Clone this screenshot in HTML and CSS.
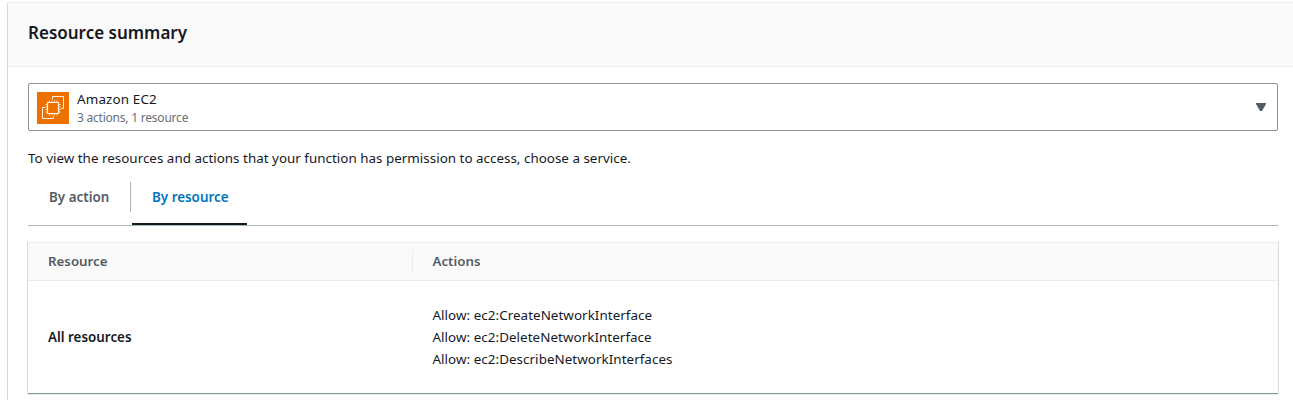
FILE: index.html
```html
<!DOCTYPE html>
<html lang="en">
<head>
<meta charset="utf-8">
<title>Resource summary</title>
<link rel="stylesheet" href="styles.css">
</head>
<body>
<section class="card">
  <header class="card-header"><h2 class="card-title"><span>Resource summary</span></h2></header>
  <div class="card-body">
    <div class="select">
      <svg class="service-icon" viewBox="0 0 32 32" fill="none" stroke="#fff0e2">
        <rect width="32" height="32" fill="#ed7100" stroke="none"/>
        <path stroke-width="1.2" d="M10.500 10.500h11v11h-11z"/>
        <path stroke-width=".9" d="M12.500 10.500v-2M15 10.500v-2M17.500 10.500v-2M20 10.500v-2M12.500 21.500v2M15 21.500v2M17.500 21.500v2M20 21.500v2M10.500 12.500h-2M10.500 15h-2M10.500 17.500h-2M10.500 20h-2M21.500 12.500h2M21.500 15h2M21.500 17.500h2M21.500 20h2"/>
        <path stroke-width="1" d="M15.500 7.500v-3h11v12h-2.500M8 15.500H5.500v11h11V24.500"/>
      </svg>
      <div class="select-text">
        <div class="service-name"><span>Amazon EC2</span></div>
        <div class="service-meta"><span>3 actions, 1 resource</span></div>
      </div>
      <svg class="caret" viewBox="0 0 10 8"><path d="M0 0h10v1L6 8H4L0 1z" fill="#545b64"/></svg>
    </div>
    <p class="hint"><span>To view the resources and actions that your function has permission to access, choose a service.</span></p>
    <nav class="tabs">
      <div class="tab"><span>By action</span></div>
      <div class="tab tab-active"><span>By resource</span></div>
    </nav>
    <div class="table">
      <div class="row head">
        <div class="cell cell-resource"><span>Resource</span></div>
        <div class="cell cell-actions"><span>Actions</span></div>
      </div>
      <div class="row">
        <div class="cell name"><span>All resources</span></div>
        <div class="cell actions">
          <div><span>Allow: ec2:CreateNetworkInterface</span></div>
          <div><span>Allow: ec2:DeleteNetworkInterface</span></div>
          <div><span>Allow: ec2:DescribeNetworkInterfaces</span></div>
        </div>
      </div>
    </div>
  </div>
</section>
</body>
</html>
```
FILE: styles.css
```css
* { box-sizing: border-box; }
body { margin: 0; height: 400px; padding: 2px 0 0 7px; background: #fff; color: #16191f; font: 13.4px/22px "Noto Sans", "Open Sans", sans-serif; }
.card { height: 398px; border-left: 1px solid #d5dbdb; border-top: 1px solid #eaeded; border-top-left-radius: 2px; }
.card-header { height: 64px; padding: 19px 20px; background: #fafafa; border-bottom: 1px solid #eaeded; }
.card-title { margin: 0; font-size: 17px; line-height: 22px; font-weight: 600; }
.card-body { padding: 16px 15px 0 20px; }
.select { display: flex; align-items: center; height: 48px; padding: 0 11px 0 8px; border: 1px solid #879596; border-radius: 2px; }
.service-icon { width: 32px; height: 32px; margin-top: 2px; }
.select-text { flex: 1; padding: 2px 0 0 8px; }
.service-name { line-height: 19px; letter-spacing: .15px; }
.service-meta { padding-top: 1px; font-size: 12px; line-height: 16px; letter-spacing: -.22px; color: #687078; }
.caret { width: 10px; height: 8px; }
.hint { margin: 16px 0 0; letter-spacing: .015px; }
.tabs { display: flex; height: 57px; border-bottom: 1px solid #aab7b8; font-weight: 600; color: #545b64; }
.tab { width: 103px; height: 30px; margin-top: 13px; padding: 4px 0 0 21px; border-right: 1px solid #aab7b8; }
.tab-active { width: 115px; height: 43px; margin-left: 1px; padding-left: 20px; border-right: 0; border-bottom: 2px solid #16191f; color: #0073bb; }
.table { margin-top: 16px; height: 152px; border-top: 1px solid #eaeded; border-bottom: 1px solid #879596; box-shadow: 1px 0 0 #d5dbdb, -1px 0 0 #d5dbdb, 0 1px 0 #eaeded; }
.row { display: grid; grid-template-columns: 385px 1fr; align-items: center; height: 112px; }
.head { height: 38px; padding-bottom: 1px; background: #fafafa; border-bottom: 1px solid #eaeded; font-size: 13.3px; font-weight: 600; color: #545b64; }
.cell { padding-left: 20px; }
.cell-resource { border-right: 1px solid #eaeded; }
.cell-actions, .actions { padding-left: 19.500px; }
.actions { letter-spacing: .05px; }
.name { font-weight: 600; }
```
